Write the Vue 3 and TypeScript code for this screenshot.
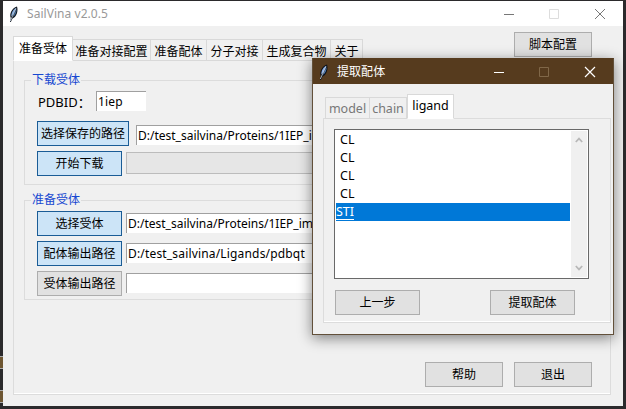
<script setup lang="ts">
import { ref } from 'vue'

interface Tab { label: string; width: number }

const mainTabs: Tab[] = [
  { label: '准备受体', width: 60 },
  { label: '准备对接配置', width: 78 },
  { label: '准备配体', width: 56 },
  { label: '分子对接', width: 56 },
  { label: '生成复合物', width: 68 },
  { label: '关于', width: 32 },
]
const dialogTabs: Tab[] = [
  { label: 'model', width: 45 },
  { label: 'chain', width: 37 },
  { label: 'ligand', width: 47 },
]
const activeMain = ref(0)
const activeDialog = ref(2)
const ligands = ['CL', 'CL', 'CL', 'CL', 'STI']
const selected = ref(4)

const pdbId = '1iep'
const savePath = 'D:/test_sailvina/Proteins/1IEP_im'
const receptorPath = 'D:/test_sailvina/Proteins/1IEP_im'
const ligandOut = 'D:/test_sailvina/Ligands/pdbqt'
</script>

<template>
  <div class="desktop">
    <i class="speck s1"></i><i class="speck s2"></i>
    <section class="window">
      <header class="bar">
        <svg class="feather" viewBox="0 0 12 18">
          <path d="M2 17 L2.800 13 C1 9 4 3 9 1.500 C10.500 6 8.500 12 4.500 13.500 L2.800 17 Z" fill="#10151c" />
          <path d="M3.400 11.500 C3 8 5.500 4 8.300 2.800 L5.500 9 Z" fill="#86acdc" />
          <path d="M4.800 12 C7.500 10.500 8.600 7 8.700 4 L6.200 9 Z" fill="#416d9e" />
          <path d="M2.300 16 L8 3.500" stroke="#d4e4f5" stroke-width=".7" />
        </svg>
        <span class="title">SailVina v2.0.5</span>
        <svg class="controls" viewBox="0 0 102 12">
          <path d="M0 6.500H10" stroke="#777" />
          <path d="M45.500 1.500h9v9h-9z" fill="none" stroke="#ddd" />
          <path d="M91 1L101 11M101 1L91 11" stroke="#777" />
        </svg>
      </header>
      <div class="body">
        <div class="top">
          <nav class="tabs">
            <span v-for="(t, i) in mainTabs" :key="t.label" class="tab" :class="{ active: i === activeMain }" :style="{ width: t.width + 'px' }" @click="activeMain = i">{{ t.label }}</span>
          </nav>
          <button class="btn small script">脚本配置</button>
        </div>
        <div class="pane">
          <fieldset class="group download">
            <legend>下载受体</legend>
            <div class="row id"><label>PDBID：</label><div class="entry code">{{ pdbId }}</div></div>
            <div class="row path"><button class="btn wide on">选择保存的路径</button><div class="entry">{{ savePath }}</div></div>
            <div class="row"><button class="btn on">开始下载</button><div class="progress"></div></div>
          </fieldset>
          <fieldset class="group prepare">
            <legend>准备受体</legend>
            <div class="row"><button class="btn on">选择受体</button><div class="entry">{{ receptorPath }}</div></div>
            <div class="row"><button class="btn on">配体输出路径</button><div class="entry loose">{{ ligandOut }}</div></div>
            <div class="row"><button class="btn">受体输出路径</button><div class="entry"></div></div>
          </fieldset>
          <footer class="actions">
            <button class="btn small">帮助</button>
            <button class="btn small">退出</button>
          </footer>
        </div>
      </div>
    </section>

    <section class="dialog">
      <header class="bar dark">
        <svg class="feather" viewBox="0 0 12 18">
          <path d="M2 17 L2.800 13 C1 9 4 3 9 1.500 C10.500 6 8.500 12 4.500 13.500 L2.800 17 Z" fill="#0c1118" />
          <path d="M3.400 11.500 C3 8 5.500 4 8.300 2.800 L5.500 9 Z" fill="#8fb2e8" />
          <path d="M4.800 12 C7.500 10.500 8.600 7 8.700 4 L6.200 9 Z" fill="#527fb8" />
          <path d="M2.300 16 L8 3.500" stroke="#e0ecfa" stroke-width=".7" />
        </svg>
        <span class="title">提取配体</span>
        <svg class="controls" viewBox="0 0 102 12">
          <path d="M0 6.500H10" stroke="#fff" />
          <path d="M45.500 1.500h9v9h-9z" fill="none" stroke="#806748" />
          <path d="M91 1L101 11M101 1L91 11" stroke="#fff" stroke-width="1.200" />
        </svg>
      </header>
      <div class="dialog-body">
        <nav class="tabs latin">
          <span v-for="(t, i) in dialogTabs" :key="t.label" class="tab" :class="{ active: i === activeDialog }" :style="{ width: t.width + 'px' }" @click="activeDialog = i">{{ t.label }}</span>
        </nav>
        <div class="dialog-pane">
          <div class="listbox">
            <ul>
              <li v-for="(l, i) in ligands" :key="i" :class="{ selected: i === selected }" @click="selected = i"><span>{{ l }}</span></li>
            </ul>
            <div class="scroll">
              <svg viewBox="0 0 8 6"><path d="M.8 5L4 1.600L7.200 5" /></svg>
              <svg viewBox="0 0 8 6"><path d="M.8 1L4 4.400L7.200 1" /></svg>
            </div>
          </div>
          <div class="dialog-actions">
            <button class="btn">上一步</button>
            <button class="btn">提取配体</button>
          </div>
        </div>
      </div>
    </section>
  </div>
</template>

<style>
body { margin: 0; overflow: hidden; }
</style>

<style scoped>
* { box-sizing: border-box; }
.desktop {
  position: relative; width: 626px; height: 409px; padding: 1px 3px 3px; overflow: hidden;
  background: #2b2a2c; color: #000;
  font: 12px/18px "Noto Sans", "Noto Sans CJK SC", sans-serif;
}
.speck { position: absolute; left: 0; width: 3px; height: 13px; background: #6e5632; border: solid #aaa; border-width: 1px 0; }
.s1 { top: 356px; }
.s2 { top: 390px; }
.window { display: flex; flex-direction: column; width: 620px; height: 405px; background: #f0f0f0; }
.bar { display: flex; align-items: center; flex: none; height: 25px; padding: 0 17px 0 5px; background: #fff; color: #999; }
.feather { width: 12px; height: 18px; margin-right: 7px; }
.title { font-size: 12px; letter-spacing: .05px; white-space: nowrap; }
.controls { width: 102px; height: 12px; margin-left: auto; }
.body { display: flex; flex-direction: column; flex: 1; padding: 6px 12px 11px 10px; }
.top { display: flex; align-items: flex-end; height: 28px; justify-content: space-between; }
.tabs { display: flex; align-items: flex-end; height: 25px; margin-bottom: -1px; position: relative; }
.tab { height: 22px; padding-top: 3px; border: 1px solid #d9d9d9; border-left-width: 0; text-align: center; white-space: nowrap; background: #f0f0f0; }
.tab.active { height: 25px; padding-top: 3px; background: #fff; border-left-width: 1px; border-bottom-color: #fff; }
.script { align-self: flex-start; margin-right: 19px; }
.btn { flex: none; width: 85px; height: 25px; padding: 1px 0 0; border: 1px solid #adadad; border-radius: 0; background: #e1e1e1; color: #000; font: inherit; line-height: 22px; text-align: center; white-space: nowrap; }
.btn.small { width: 78px; }
.btn.wide { width: 92px; }
.btn.on { border-color: #1a5c96; background: #cce4f7; }
.pane { display: flex; flex-direction: column; flex: 1; border: 1px solid #dcdcdc; box-shadow: inset 0 -1px #fff; padding: 10px 10px 7px; }
.group { min-width: 0; margin: 0; padding: 0 0 0 12px; border: 1px solid #dcdcdc; }
.group legend { height: 18px; margin-left: -6px; padding: 0 1px; color: #1748d1; }
.download { height: 114px; }
.prepare { height: 109px; margin-top: 6px; padding-top: 2px; }
.row { display: flex; align-items: flex-start; height: 25px; margin-bottom: 5px; gap: 4px; }
.row.id { height: 20px; margin: 2px 0 10px; gap: 0; }
.row.id label { width: 59px; padding: 2px 0 0 1px; font-size: 13px; white-space: nowrap; }
.row.path { gap: 7px; }
.entry { flex: 1; min-width: 0; height: 20px; margin-top: 2px; padding-left: 1px; border: solid #a0a0a0; border-width: 1px 0 0 1px; background: #fff; line-height: 20px; white-space: nowrap; overflow: hidden; }
.entry.loose { letter-spacing: .17px; }
.row.path .entry { margin-top: 4px; }
.entry.code { flex: none; width: 50px; margin-top: 0; line-height: 19px; letter-spacing: .2px; }
.progress { flex: 1; height: 22px; margin-top: 1px; border: 1px solid #bcbcbc; background: #e6e6e6; }
.actions { display: flex; justify-content: flex-end; gap: 11px; margin-top: auto; padding-right: 8px; }
.dialog {
  position: absolute; left: 312px; top: 58px; width: 302px; height: 277px;
  display: flex; flex-direction: column; border: 1px solid #62503a; border-top-color: #563b1e; background: #f0f0f0;
  box-shadow: 0 3px 13px rgba(0, 0, 0, .48);
}
.bar.dark { background: #563b1e; color: #fff; }
.dialog-body { display: flex; flex-direction: column; flex: 1; padding: 10px 2px 12px 10px; }
.latin { margin-left: 2px; color: #777; font-size: 12.500px; }
.latin .tab { padding-top: 2px; }
.latin .tab:first-child { border-left-width: 1px; }
.latin .active { color: #000; }
.dialog-pane { display: flex; flex-direction: column; flex: 1; padding: 10px 10px 7px; border: 1px solid #dcdcdc; box-shadow: inset 0 -1px #fff; }
.listbox { display: flex; width: 255px; height: 150px; border: 1px solid #696969; padding: 1px; background: #fff; }
ul { flex: 1; margin: 0; padding: 0; list-style: none; }
li { height: 18px; padding-left: 4px; font-size: 12.500px; line-height: 18px; }
li.selected { padding-left: 0; color: #fff; background: #0078d7; }
li.selected span { display: inline-block; height: 17px; border-bottom: 1px solid #fff; }
.scroll { display: flex; flex-direction: column; justify-content: space-between; align-items: center; width: 16px; margin-left: 1px; padding: 6px 0; background: #f0f0f0; }
.scroll svg { width: 8px; height: 6px; }
.scroll path { fill: none; stroke: #b8b8b8; stroke-width: 1.700; }
.dialog-actions { display: flex; gap: 70px; margin: 11px 0 0 1px; }
</style>
